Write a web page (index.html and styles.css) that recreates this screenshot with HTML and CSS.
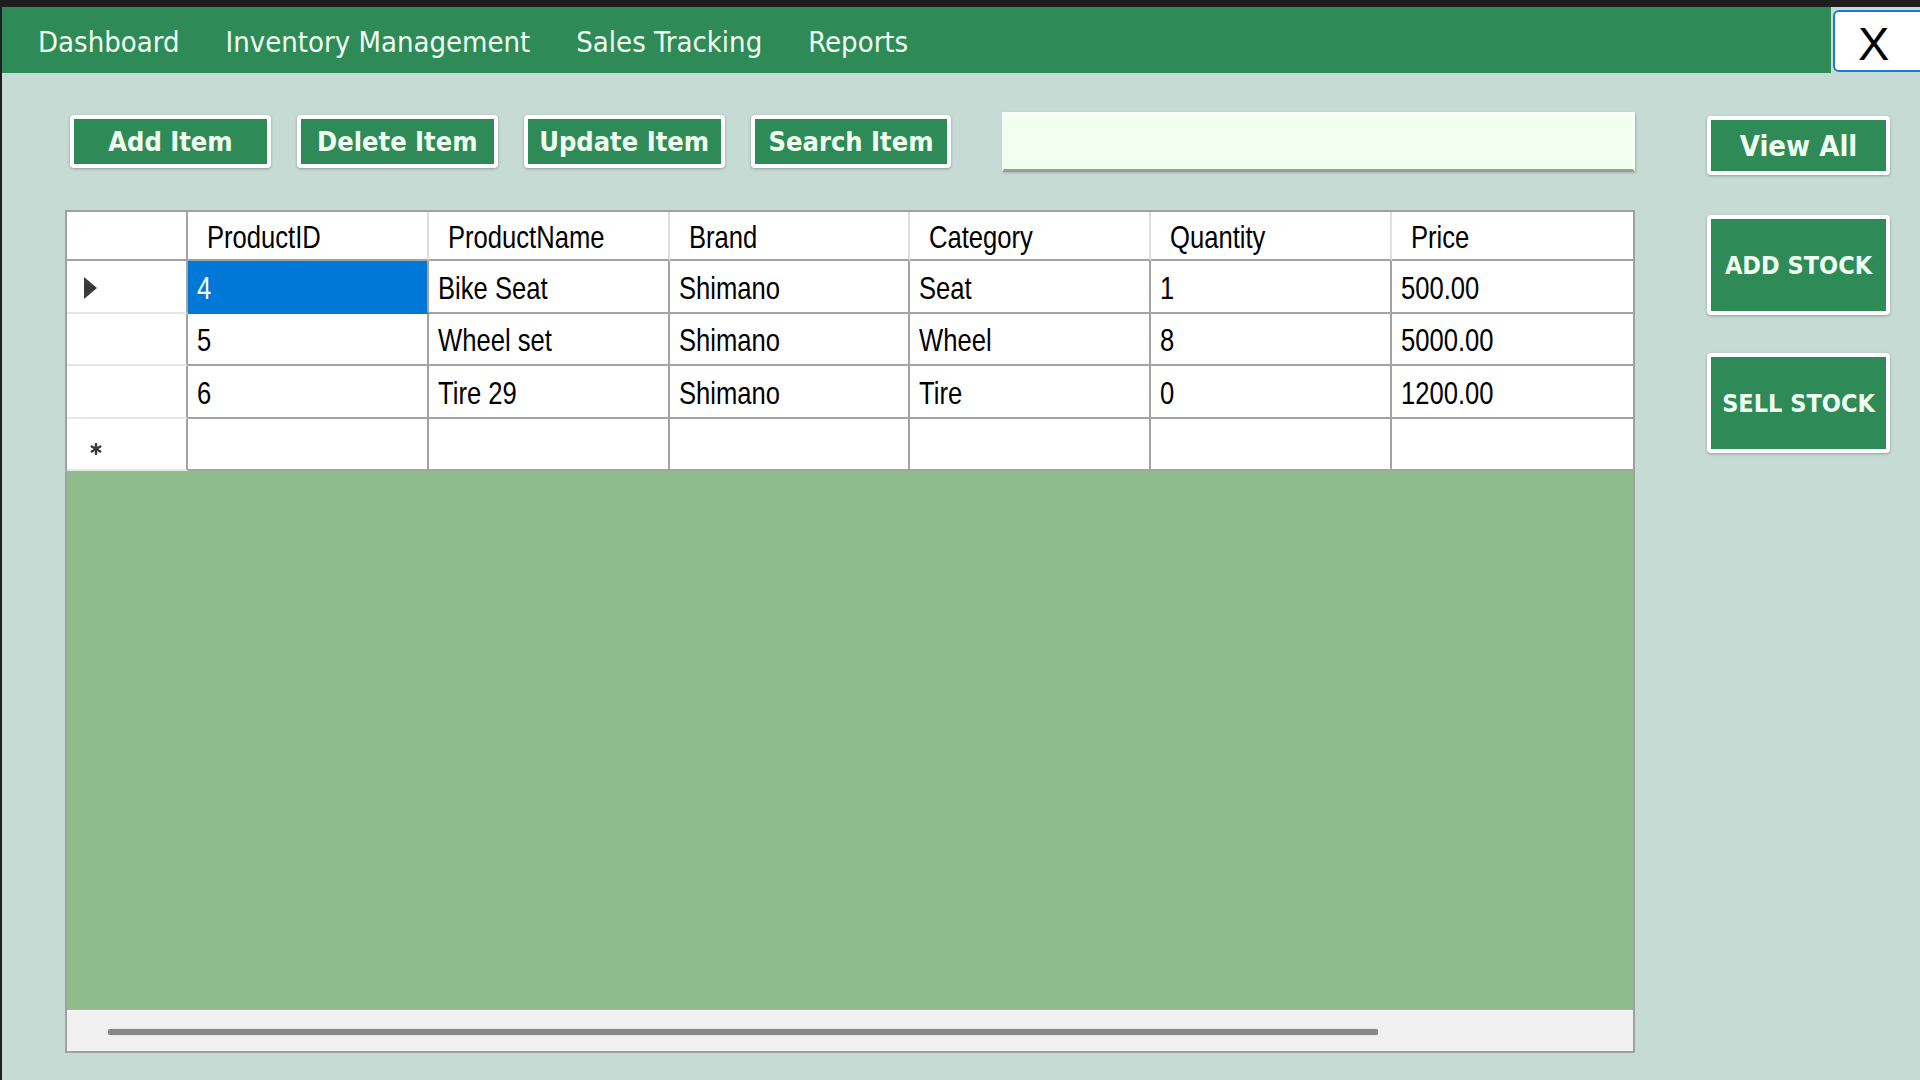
FILE: index.html
```html
<!DOCTYPE html>
<html lang="en">
<head>
<meta charset="utf-8">
<title>Inventory Management</title>
<link rel="stylesheet" href="styles.css">
</head>
<body>
<div class="window">
  <header class="topbar">
    <nav class="menu">
      <span class="menu-item">Dashboard</span>
      <span class="menu-item">Inventory Management</span>
      <span class="menu-item">Sales Tracking</span>
      <span class="menu-item">Reports</span>
    </nav>
    <div class="close-area"><button class="close-btn">X</button></div>
  </header>
  <main class="content">
    <section class="left">
      <div class="toolbar">
        <button class="btn btn-tool">Add Item</button>
        <button class="btn btn-tool">Delete Item</button>
        <button class="btn btn-tool">Update Item</button>
        <button class="btn btn-tool">Search Item</button>
        <input class="search" type="text">
      </div>
      <div class="grid">
        <div class="row head">
          <div class="rh"></div>
          <div class="hc"><span>ProductID</span></div>
          <div class="hc"><span>ProductName</span></div>
          <div class="hc"><span>Brand</span></div>
          <div class="hc"><span>Category</span></div>
          <div class="hc"><span>Quantity</span></div>
          <div class="hc last"><span>Price</span></div>
        </div>
        <div class="row r1">
          <div class="rh"><svg class="tri" width="13" height="22" viewBox="0 0 13 22"><polygon points="0,0 13,11 0,22" fill="#3a3a3a"/></svg></div>
          <div class="c sel"><span>4</span></div>
          <div class="c"><span>Bike Seat</span></div>
          <div class="c"><span>Shimano</span></div>
          <div class="c"><span>Seat</span></div>
          <div class="c"><span>1</span></div>
          <div class="c last"><span>500.00</span></div>
        </div>
        <div class="row r2">
          <div class="rh"></div>
          <div class="c"><span>5</span></div>
          <div class="c"><span>Wheel set</span></div>
          <div class="c"><span>Shimano</span></div>
          <div class="c"><span>Wheel</span></div>
          <div class="c"><span>8</span></div>
          <div class="c last"><span>5000.00</span></div>
        </div>
        <div class="row r1">
          <div class="rh"></div>
          <div class="c"><span>6</span></div>
          <div class="c"><span>Tire 29</span></div>
          <div class="c"><span>Shimano</span></div>
          <div class="c"><span>Tire</span></div>
          <div class="c"><span>0</span></div>
          <div class="c last"><span>1200.00</span></div>
        </div>
        <div class="row r2">
          <div class="rh"><svg class="star" width="12" height="12" viewBox="0 0 12 12"><g stroke="#3a3a3a" stroke-width="2.4" stroke-linecap="round"><line x1="6" y1="1" x2="6" y2="11"/><line x1="1.7" y1="3.5" x2="10.3" y2="8.5"/><line x1="1.7" y1="8.5" x2="10.3" y2="3.5"/></g></svg></div>
          <div class="c"></div>
          <div class="c"></div>
          <div class="c"></div>
          <div class="c"></div>
          <div class="c"></div>
          <div class="c last"></div>
        </div>
        <div class="grid-empty"></div>
        <div class="hscroll"><div class="thumb"></div></div>
      </div>
    </section>
    <aside class="right">
      <button class="btn btn-view">View All</button>
      <button class="btn btn-tall btn-add">ADD STOCK</button>
      <button class="btn btn-tall btn-sell">SELL STOCK</button>
    </aside>
  </main>
</div>
</body>
</html>
```
FILE: styles.css
```css
html, body {
  margin: 0;
  padding: 0;
  width: 1920px;
  height: 1080px;
  overflow: hidden;
  background: #c6dbd3;
}

.window {
  box-sizing: border-box;
  height: 1080px;
  border-top: 7px solid #1e1e1e;
  border-left: 2px solid #1e1e1e;
  background: #c6dbd3;
}

.topbar {
  display: flex;
  height: 66px;
}

.menu {
  flex: 1;
  box-sizing: border-box;
  background: #2e8b57;
  display: flex;
  align-items: center;
  gap: 46px;
  padding-left: 36px;
  padding-top: 3px;
  font-family: "DejaVu Sans Condensed", "DejaVu Sans", sans-serif;
  font-stretch: condensed;
  font-size: 29px;
  color: #f0fff0;
}

.close-area {
  width: 87px;
  display: flex;
  align-items: flex-start;
  padding-left: 2px;
  overflow: hidden;
}

.close-btn {
  margin-top: 3px;
  width: 92px;
  flex: none;
  height: 62px;
  background: #ffffff;
  border: 2px solid #1a7ad6;
  border-radius: 6px;
  padding: 5px 0 0 23px;
  text-align: left;
  font-family: "Liberation Sans", Arial, sans-serif;
  font-size: 47px;
  line-height: 52px;
  color: #000;
}

.content {
  display: flex;
  height: 1007px;
}

.left {
  padding-left: 63px;
  width: 1570px;
}

.toolbar {
  display: flex;
  align-items: flex-start;
  gap: 26px;
  margin-top: 39px;
  margin-left: 5px;
  height: 60px;
}

.btn {
  box-sizing: border-box;
  background: #2e8b57;
  border: 4px solid #ffffff;
  border-radius: 4px;
  box-shadow: 0 1px 3px rgba(0, 0, 0, 0.28);
  color: #f0fff0;
  font-family: "DejaVu Sans Condensed", "DejaVu Sans", sans-serif;
  font-stretch: condensed;
  font-weight: bold;
  padding: 0;
  cursor: pointer;
}

.btn-tool {
  margin-top: 3px;
  width: 201px;
  height: 53px;
  font-size: 27px;
}

.search {
  box-sizing: border-box;
  margin-left: 25px;
  width: 633px;
  height: 60px;
  background: #f0fff0;
  border: 2px solid #fbfffb;
  border-bottom: 3px solid #9c9c9c;
  box-shadow: 1px 1px 2px rgba(0, 0, 0, 0.18);
  outline: none;
}

.grid {
  box-sizing: border-box;
  margin-top: 38px;
  width: 1570px;
  height: 843px;
  border: 2px solid #a0a0a0;
  display: flex;
  flex-direction: column;
  background: #ffffff;
}

.row {
  display: grid;
  grid-template-columns: 121px repeat(6, 1fr);
  background: #ffffff;
}

.row.head { height: 49px; }
.row.r1 { height: 53px; }
.row.r2 { height: 52px; }

.rh, .hc, .c {
  box-sizing: border-box;
  display: flex;
  align-items: center;
  overflow: hidden;
  font-family: "Liberation Sans", Arial, sans-serif;
  font-size: 32px;
  color: #000;
  white-space: nowrap;
  padding-top: 3px;
}

.rh, .hc, .c { border-right: 2px solid #a3a3a3; }

.head .rh { border-bottom: 2px solid #a3a3a3; }
.hc {
  border-right-color: #dedede;
  border-bottom: 2px solid #a3a3a3;
  padding-left: 19px;
}
.hc.last, .c.last { border-right: none; }

.c {
  border-bottom: 2px solid #a3a3a3;
  padding-left: 9px;
}

.rh {
  border-bottom: 2px solid #e6e6e6;
  padding-top: 0;
}

.row .rh .tri { margin-left: 17px; margin-top: 3px; }
.row .rh .star { margin-left: 23px; margin-top: 10px; }

.hc span, .c span {
  display: inline-block;
  transform: scaleX(0.8);
  transform-origin: left center;
}

.c.sel {
  background: #0078d7;
  color: #ffffff;
  border-bottom-color: #0078d7;
}

.grid-empty {
  flex: 1;
  background: #8fbc8b;
}

.hscroll {
  height: 41px;
  background: #f0f0f0;
  border-top: 1px solid #ffffff;
  box-sizing: border-box;
  padding-top: 18px;
  padding-left: 41px;
}

.thumb {
  width: 1270px;
  height: 6px;
  background: #878787;
  border-radius: 2px;
  box-shadow: 0 0 1px rgba(0, 0, 0, 0.3);
}

.right {
  display: flex;
  flex-direction: column;
  margin-left: 72px;
  width: 183px;
}

.btn-view {
  margin-top: 43px;
  height: 59px;
  width: 183px;
  font-size: 29px;
}

.btn-tall {
  height: 100px;
  width: 183px;
  font-size: 25px;
}

.btn-add { margin-top: 40px; }
.btn-sell { margin-top: 38px; }
```
